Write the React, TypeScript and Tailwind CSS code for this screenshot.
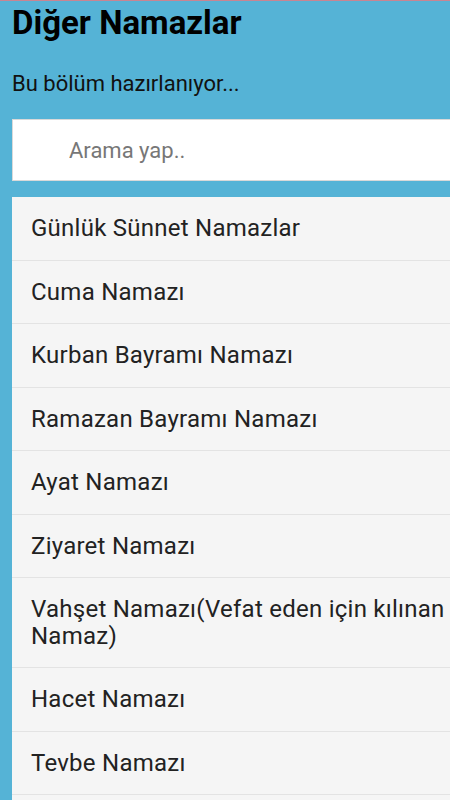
import React from "react";

const items = [
  "Günlük Sünnet Namazlar",
  "Cuma Namazı",
  "Kurban Bayramı Namazı",
  "Ramazan Bayramı Namazı",
  "Ayat Namazı",
  "Ziyaret Namazı",
  "Vahşet Namazı(Vefat eden için kılınan Namaz)",
  "Hacet Namazı",
  "Tevbe Namazı",
];

export default function App() {
  return (
    <div
      className="w-[450px] h-[800px] overflow-hidden bg-[#55b3d6] border-t border-[#c98592]"
      style={{ fontFamily: "Roboto, 'Noto Sans', sans-serif" }}
    >
      {/* Header */}
      <div className="px-3 pt-[2px]">
        <h1 className="text-[33px] leading-[40px] font-bold text-black">Diğer Namazlar</h1>
        <p className="mt-[28px] text-[22px] leading-[26px] text-[#111]">Bu bölüm hazırlanıyor...</p>
      </div>

      {/* Arama */}
      <div className="pl-3 mt-[22px]">
        <div className="w-[450px] h-[62px] bg-white border border-[#d9d9d9] flex items-center pl-[56px]">
          <input
            className="w-full bg-transparent outline-none text-[22px] text-[#333] placeholder:text-[#777]"
            placeholder="Arama yap.."
          />
        </div>
      </div>

      {/* Liste */}
      <div className="pl-3 mt-[16px]">
        <ul className="w-[450px] bg-[#f5f5f5]">
          {items.map((item) => (
            <li
              key={item}
              className="pl-[19px] pr-[8px] py-[18px] text-[24px] leading-[26.5px] tracking-[0.25px] text-[#222] border-b border-[#e3e3e3]"
            >
              {item}
            </li>
          ))}
          <li aria-hidden className="h-[63px]" />
        </ul>
      </div>
    </div>
  );
}
